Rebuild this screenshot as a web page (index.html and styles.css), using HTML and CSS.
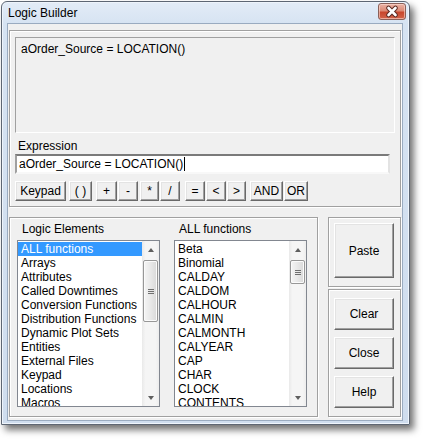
FILE: index.html
```html
<!DOCTYPE html>
<html>
<head>
<meta charset="utf-8">
<title>Logic Builder</title>
<link rel="stylesheet" href="styles.css">
</head>
<body>
<div class="window">
  <div class="titlebar">
    <span class="title">Logic Builder</span>
    <div class="close" aria-label="Close">
      <svg width="28" height="17" viewBox="0 0 28 17">
        <path d="M10.5 5 L17.5 12 M17.5 5 L10.5 12" stroke="#5b2a22" stroke-width="4.6" stroke-linecap="round"/>
        <path d="M10.5 5 L17.5 12 M17.5 5 L10.5 12" stroke="#ffffff" stroke-width="2.6" stroke-linecap="round"/>
      </svg>
    </div>
  </div>
  <div class="client">
    <div class="group top-group">
      <div class="display">aOrder_Source = LOCATION()</div>
      <div class="expr-label">Expression</div>
      <div class="textbox">aOrder_Source = LOCATION()<span class="caret"></span></div>
      <div class="ops">
        <div class="btn b-keypad">Keypad</div>
        <div class="btn b-paren">( )</div>
        <div class="btn b-plus">+</div>
        <div class="btn b-minus">-</div>
        <div class="btn b-mul">*</div>
        <div class="btn b-div">/</div>
        <div class="btn b-eq">=</div>
        <div class="btn b-lt">&lt;</div>
        <div class="btn b-gt">&gt;</div>
        <div class="btn b-and">AND</div>
        <div class="btn b-or">OR</div>
      </div>
    </div>
    <div class="lower">
      <div class="group lists-group">
        <div class="col col1">
          <div class="list-label">Logic Elements</div>
          <div class="listbox lb1">
            <div class="items">
              <div class="item sel">ALL functions</div>
              <div class="item">Arrays</div>
              <div class="item">Attributes</div>
              <div class="item">Called Downtimes</div>
              <div class="item">Conversion Functions</div>
              <div class="item">Distribution Functions</div>
              <div class="item">Dynamic Plot Sets</div>
              <div class="item">Entities</div>
              <div class="item">External Files</div>
              <div class="item">Keypad</div>
              <div class="item">Locations</div>
              <div class="item">Macros</div>
            </div>
            <div class="sb">
              <div class="arrow up"></div>
              <div class="track"><div class="thumb t1"><span class="grip"></span></div></div>
              <div class="arrow down"></div>
            </div>
          </div>
        </div>
        <div class="col col2">
          <div class="list-label">ALL functions</div>
          <div class="listbox lb2">
            <div class="items">
              <div class="item">Beta</div>
              <div class="item">Binomial</div>
              <div class="item">CALDAY</div>
              <div class="item">CALDOM</div>
              <div class="item">CALHOUR</div>
              <div class="item">CALMIN</div>
              <div class="item">CALMONTH</div>
              <div class="item">CALYEAR</div>
              <div class="item">CAP</div>
              <div class="item">CHAR</div>
              <div class="item">CLOCK</div>
              <div class="item">CONTENTS</div>
            </div>
            <div class="sb">
              <div class="arrow up"></div>
              <div class="track"><div class="thumb t2"><span class="grip"></span></div></div>
              <div class="arrow down"></div>
            </div>
          </div>
        </div>
      </div>
      <div class="side">
        <div class="group paste-group">
          <div class="btn paste">Paste</div>
        </div>
        <div class="group action-group">
          <div class="btn action">Clear</div>
          <div class="btn action">Close</div>
          <div class="btn action">Help</div>
        </div>
      </div>
    </div>
  </div>
</div>
</body>
</html>
```

FILE: styles.css
```css
* { box-sizing: border-box; }
html, body {
  margin: 0;
  padding: 0;
  background: #ffffff;
}
body {
  font-family: "Liberation Sans", Arial, sans-serif;
  font-size: 12px;
  color: #000;
  width: 423px;
  height: 439px;
  overflow: hidden;
}
.window {
  margin: 1px 0 0 1px;
  width: 409px;
  height: 424px;
  border: 1px solid #5d6673;
  border-radius: 6px 6px 0 0;
  background: linear-gradient(#e3ecf7 0px, #d6e3f2 22px, #cfddee 100%);
  box-shadow: 4px 5px 7px rgba(0, 0, 0, 0.55), inset 0 0 0 1px #eef4fb;
  display: flex;
  flex-direction: column;
}
.titlebar {
  height: 21px;
  display: flex;
  justify-content: space-between;
  align-items: flex-start;
  padding: 0 3px 0 6px;
}
.title {
  line-height: 20px;
  margin-top: 1px;
  color: #000;
}
.close {
  width: 28px;
  height: 17px;
  margin-top: 1px;
  border: 1px solid #8a6058;
  border-radius: 3px;
  background: linear-gradient(#eab3a5 0%, #dc8a75 45%, #c8472d 55%, #d2644a 100%);
  box-shadow: inset 0 0 0 1px rgba(255, 220, 210, 0.6);
  display: flex;
  align-items: center;
  justify-content: center;
}
.close svg { display: block; margin: -1px; }
.client {
  margin: 0 6px 3px 5px;
  height: 398px;
  border: 1px solid #9aabc0;
  background: #f0f0f0;
  padding: 6px 1px 3px 1px;
}
.group {
  border: 1px solid #a0a0a0;
  box-shadow: inset 1px 1px 0 #ffffff, 1px 1px 0 #ffffff;
}
.top-group {
  height: 177px;
  padding: 6px 5px 5px 5px;
}
.display {
  height: 96px;
  border: 1px solid;
  border-color: #a0a0a0 #ffffff #ffffff #a0a0a0;
  padding: 4px 0 0 5px;
  line-height: 14px;
}
.expr-label {
  margin-top: 6px;
  line-height: 14px;
  padding-left: 3px;
}
.textbox {
  margin-top: 1px;
  width: 375px;
  height: 20px;
  background: #fff;
  border: 2px solid;
  border-color: #7a7a7a #e3e3e3 #f8f8f8 #a0a0a0;
  padding: 1px 0 0 2px;
  line-height: 14px;
  display: flex;
  align-items: flex-start;
}
.caret {
  display: inline-block;
  width: 1px;
  height: 14px;
  background: #000;
  margin-left: 1px;
}
.ops {
  margin-top: 7px;
  display: flex;
  gap: 1px;
}
.btn {
  background: #f0f0f0;
  border: 1px solid;
  border-color: #ffffff #696969 #696969 #ffffff;
  box-shadow: inset -1px -1px 0 #a0a0a0, inset 1px 1px 0 #e3e3e3;
  display: flex;
  align-items: center;
  justify-content: center;
  line-height: 14px;
  color: #000;
}
.ops .btn { height: 20px; padding-bottom: 1px; }
.b-keypad { width: 51px; }
.b-paren { width: 23px; margin-left: 2px; }
.b-plus { width: 21px; margin-left: 3px; }
.b-minus { width: 20px; }
.b-mul { width: 19px; margin-left: 1px; }
.b-div { width: 20px; }
.b-eq { width: 20px; margin-left: 4px; }
.b-lt { width: 20px; }
.b-gt { width: 19px; }
.b-and { width: 33px; margin-left: 3px; }
.b-or { width: 24px; }
.lower {
  margin-top: 10px;
  height: 200px;
  display: flex;
  gap: 10px;
}
.lists-group {
  width: 309px;
  height: 200px;
  padding: 4px 0 0 7px;
  display: flex;
  gap: 14px;
}
.list-label {
  line-height: 14px;
  padding-left: 5px;
}
.listbox {
  margin-top: 4px;
  height: 167px;
  border: 1px solid #828790;
  background: #fff;
  display: flex;
  overflow: hidden;
}
.lb1 { width: 143px; }
.lb2 { width: 133px; }
.items {
  flex: 1;
  padding-top: 1px;
  overflow: hidden;
}
.item {
  height: 14px;
  line-height: 14px;
  padding-left: 3px;
  white-space: nowrap;
}
.item.sel {
  background: #3399ff;
  color: #fff;
}
.sb {
  width: 17px;
  flex: none;
  background: linear-gradient(to right, #e9e9e9, #f5f5f5 20%, #f5f5f5 80%, #ededed);
  display: flex;
  flex-direction: column;
}
.arrow {
  height: 17px;
  flex: none;
  display: flex;
  align-items: center;
  justify-content: center;
}
.arrow::before {
  content: "";
  width: 0;
  height: 0;
  border-left: 3.5px solid transparent;
  border-right: 3.5px solid transparent;
}
.arrow.up::before { border-bottom: 4px solid #5f5f5f; }
.arrow.down::before { border-top: 4px solid #5f5f5f; }
.track {
  flex: 1;
  padding: 2px 1px 0 1px;
}
.thumb {
  border: 1px solid #979797;
  border-radius: 2px;
  background: linear-gradient(to right, #f5f5f5, #e8e8e8 50%, #d9d9d9);
  box-shadow: inset 0 0 0 1px #fbfbfb;
  display: flex;
  align-items: center;
  justify-content: center;
}
.t1 { height: 62px; }
.t2 { height: 24px; }
.grip {
  width: 6px;
  height: 5px;
  border-top: 1px solid #6f6f6f;
  border-bottom: 1px solid #6f6f6f;
  position: relative;
}
.grip::after {
  content: "";
  position: absolute;
  left: 0;
  right: 0;
  top: 1px;
  border-top: 1px solid #6f6f6f;
}
.side {
  width: 73px;
  display: flex;
  flex-direction: column;
  gap: 2px;
}
.paste-group {
  height: 70px;
  padding: 5px 0 0 5px;
}
.paste {
  width: 60px;
  height: 55px;
}
.action-group {
  height: 128px;
  padding: 8px 0 0 5px;
  display: flex;
  flex-direction: column;
  gap: 7px;
}
.action {
  width: 60px;
  height: 32px;
}
```
